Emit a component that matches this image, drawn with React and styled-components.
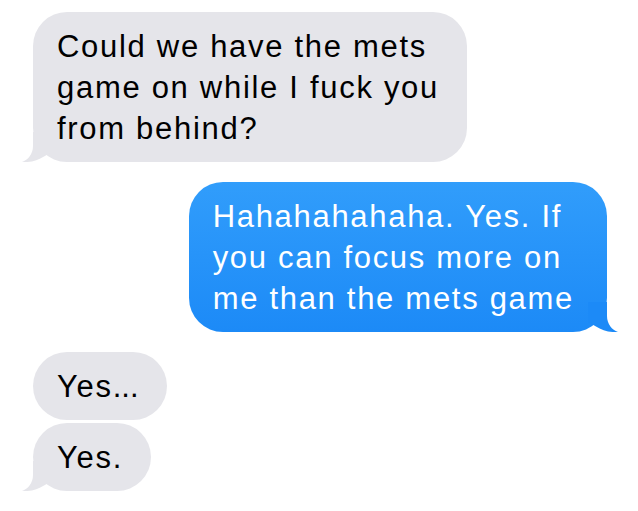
import React from "react"
import styled, { createGlobalStyle } from "styled-components"

const GlobalStyle = createGlobalStyle`
  body {
    margin: 0;
    background: #ffffff;
    font-family: "Liberation Sans", Arial, sans-serif;
  }
`

const Thread = styled.div`
  display: flex;
  flex-direction: column;
  padding: 12px 31px 0 33px;
`

const Bubble = styled.div`
  position: relative;
  align-self: ${props => (props.$mine ? "flex-end" : "flex-start")};
  margin-top: ${props => props.$gap || 0}px;
  padding: 14px ${props => (props.$mine ? 33 : 28)}px 13px 24px;
  border-radius: 34px;
  font-size: 31px;
  line-height: 41px;
  letter-spacing: 1.7px;
  white-space: nowrap;
  color: ${props => (props.$mine ? "#ffffff" : "#000000")};
  background: ${props =>
    props.$mine ? "linear-gradient(180deg, #319dfb 0%, #1c8af7 100%)" : "#e5e5ea"};
`

const Dots = styled.span`
  letter-spacing: 0;
`

const Tail = styled.svg`
  position: absolute;
  bottom: 0;
  width: 30px;
  height: 30px;
  ${props => (props.$mine ? "right: -11px; transform: scaleX(-1);" : "left: -11px;")}
`

const TailShape = ({ mine }) => (
  <Tail $mine={mine} viewBox="0 0 30 30">
    <path
      d="M11 0 L11 14 C11 22 6 28 0 30 C8 30.6 16 28.5 22 24.5 L30 20 L30 0 Z"
      fill={mine ? "#1c8af7" : "#e5e5ea"}
    />
  </Tail>
)

const Message = ({ mine, gap, tail, children }) => (
  <Bubble $mine={mine} $gap={gap}>
    {tail && <TailShape mine={mine} />}
    {children}
  </Bubble>
)

const App = () => (
  <>
    <GlobalStyle />
    <Thread>
      <Message tail>
        Could we have the mets
        <br />
        game on while I fuck you
        <br />
        from behind?
      </Message>
      <Message mine tail gap={20}>
        Hahahahahaha. Yes. If
        <br />
        you can focus more on
        <br />
        me than the mets game
      </Message>
      <Message gap={20}>
        Yes<Dots>...</Dots>
      </Message>
      <Message tail gap={3}>Yes.</Message>
    </Thread>
  </>
)

export default App
